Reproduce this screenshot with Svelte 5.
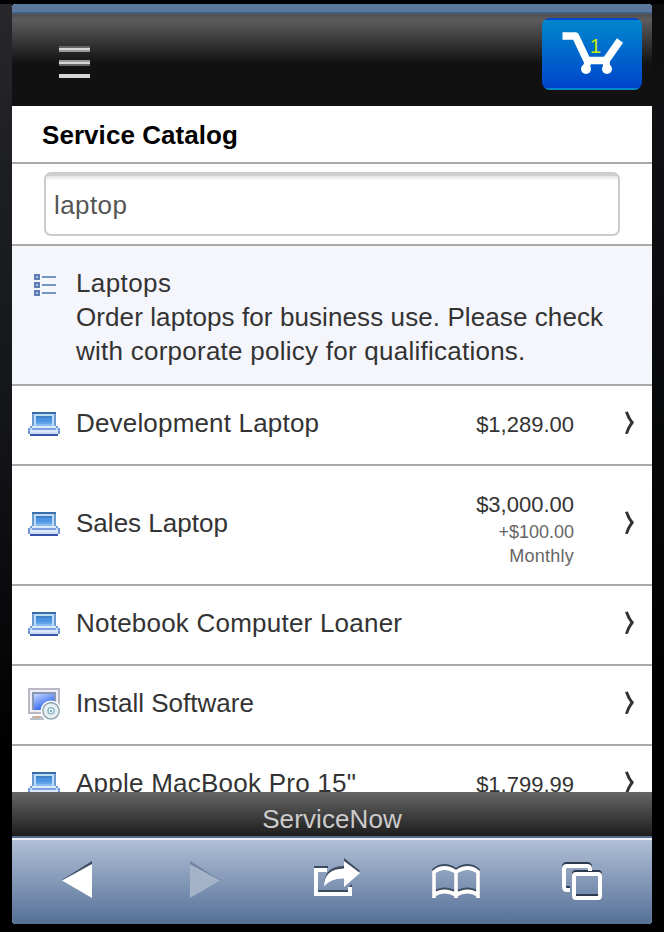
<script>
  const items = [
    { name: 'Development Laptop', w: 243, price: '$1,289.00', icon: 'laptop' },
    { name: 'Sales Laptop', w: 152, price: '$3,000.00', recurring: ['+$100.00', 'Monthly'], icon: 'laptop', tall: true },
    { name: 'Notebook Computer Loaner', w: 326, icon: 'laptop' },
    { name: 'Install Software', w: 178, icon: 'software' },
    { name: 'Apple MacBook Pro 15"', w: 280, price: '$1,799.99', icon: 'laptop' }
  ];
</script>

<div class="device">
  <div class="screen">
    <div class="strip"></div>
    <header>
      <svg class="menu" width="34" height="34" viewBox="0 0 34 34" shape-rendering="crispEdges">
        <path d="M1 1h31v2H1zM1 19h31v2H1z" fill="#666" />
        <path d="M1 3h31v2H1zM1 17h31v2H1zM1 29h31v4H1z" fill="#d6d6d6" />
        <path d="M1 5h31v2H1zM1 15h31v2H1z" fill="#999" />
      </svg>
      <div class="cart">
        <svg width="100" height="72" viewBox="0 0 100 72">
          <path d="M20.500 18H33.500L45 42.500H64L78 22.500" fill="none" stroke="#fff" stroke-width="7.500" stroke-linejoin="round" />
          <path d="M46 43L44 51M64 43L65 51" stroke="#fff" stroke-width="7" />
          <circle cx="44" cy="51" r="5" fill="#fff" /><circle cx="65" cy="51" r="5" fill="#fff" />
        </svg>
        <span class="count">1</span>
      </div>
    </header>
    <h1>Service Catalog</h1>
    <div class="search"><div class="field">laptop</div></div>
    <div class="category">
      <svg width="24" height="24" viewBox="0 0 24 24" shape-rendering="crispEdges">
        {#each [0, 8, 16] as y}
          <rect x="0" y={y} width="6" height="6" fill="#607db4" />
          <rect x="2" y={y + 2} width="2" height="2" fill="#a7bce0" />
          <rect x="8" y={y + 2} width="14" height="2" fill="#7396c7" />
        {/each}
      </svg>
      <div class="about">
        <div class="t1">Laptops</div>
        <div class="t2">Order laptops for business use. Please check</div>
        <div class="t3">with corporate policy for qualifications.</div>
      </div>
    </div>
    <main>
      {#each items as item}
        <div class="row" class:tall={item.tall}>
          {#if item.icon === 'laptop'}
            <svg class="ico" width="32" height="24" viewBox="0 0 16 12" shape-rendering="crispEdges">
              <path d="M2 0h12v7H2z" fill="#6a9ace" /><path d="M2 0h12v1H2z" fill="#3970aa" />
              <path d="M3 1h10v6H3z" fill="#bfdcf7" /><path d="M4 2h8v5H4z" fill="#4b95e4" />
              <path d="M4 2h8v1H4z" fill="#417fc9" /><path d="M4 5h8v1H4z" fill="#64a5ea" /><path d="M4 6h8v1H4z" fill="#8bbcf1" />
              <path d="M1 7h14v1H1zM0 8h16v3H0z" fill="#7098d2" /><path d="M2 7h12v1H2z" fill="#d9eafa" />
              <path d="M1 8h1v1H1zM14 8h1v1h-1z" fill="#c4d8f4" /><path d="M2 8h12v1H2z" fill="#7f9fdc" /><path d="M1 9h14v1H1z" fill="#dce8fb" />
              <path d="M1 10h14v1H1z" fill="#cddcf7" /><path d="M1 11h14v1H1z" fill="#3555a8" />
            </svg>
          {:else}
            <svg class="ico" width="32" height="32" viewBox="0 0 16 16">
              <defs><linearGradient id="display" x2=".6" y2="1"><stop stop-color="#c4d8ff" /><stop offset="1" stop-color="#2459ec" /></linearGradient></defs>
              <g shape-rendering="crispEdges">
                <path d="M0 0h16v13H0z" fill="#b8b8c8" /><path d="M1 1h14v11H1z" fill="#eeeef4" />
                <path d="M2 2h12v9H2z" fill="#8797b4" /><path d="M3 3h10v8H3z" fill="url(#display)" />
                <path d="M2 14h6v1H2zM1 15h7v1H1z" fill="#b9c0c9" /><path d="M3 14h3v1H3z" fill="#d2ad95" />
              </g>
              <circle cx="11.500" cy="11.400" r="5.200" fill="#fff" /><circle cx="11.500" cy="11.400" r="4.100" fill="#e5eef0" stroke="#96a9b2" stroke-width=".8" />
              <circle cx="11.500" cy="11.400" r="1.500" fill="#fff" stroke="#8fb9cb" stroke-width=".8" /><path d="M11 11h1v1h-1z" fill="#78a6b9" />
            </svg>
          {/if}
          <svg class="label" width="350" height="34"><text x="0" y="26" textLength={item.w}>{item.name}</text></svg>
          {#if item.price}
            <div class="prices">
              <div class="price">{item.price}</div>
              {#each item.recurring ?? [] as line}<div class="sub">{line}</div>{/each}
            </div>
          {/if}
          <svg class="chev" width="12" height="24" viewBox="0 0 12 24"><path d="M1 1L3.800 .6Q6.300 7.500 10 11.500Q6.300 16 3.800 23L1 22.700Q3 16 6.300 11.500Q3 7.500 1 1z" fill="#333" /></svg>
        </div>
      {/each}
    </main>
    <footer><span>ServiceNow</span></footer>
    <nav>
      <svg width="640" height="84" viewBox="0 0 640 84">
        <path d="M50 40L80 21V25L53 40z" fill="#3e4d62" /><path d="M50 40.500L80 24V58z" fill="#fff" />
        <path d="M178 21L208 40H204L178 25z" fill="#71829d" /><path d="M178 24L208 40.500L178 58z" fill="#a5b3c8" />
        <g>
          <path d="M302 26H316V28H302zM306 50H336V52H306zM336 48L340 44V48z" fill="#3c4b60" />
          <path d="M315 30H304V54H338V47" fill="none" stroke="#fff" stroke-width="4" />
          <path d="M312 44Q313 26 332 26V18L348 31L332 44V37Q319 36 312 46z" fill="#3c4b60" />
          <path d="M312 46.500Q312 29 332 28.500V21L348 33L332 47V38.500Q319 38 312 46.500z" fill="#fff" />
        </g>
        {#each [{ y: -2, c: '#3d4b60' }, { y: 0, c: '#fff' }] as p}
          <path transform="translate(0 {p.y})" d="M422 58V32Q432 24 444 32V58M444 32Q456 24 466 32V58M422 55Q432 48 444 55Q456 48 466 55" fill="none" stroke={p.c} stroke-width="3.700" />
        {/each}
        {#each [{ y: -2, c: '#2d394d' }, { y: 0, c: '#fff' }] as p}
          <g transform="translate(0 {p.y})" fill="none" stroke={p.c} stroke-width="4">
            <path d="M558 50H555Q552 50 552 47V29Q552 26 555 26H575Q578 26 578 29V31" />
            <rect x="562" y="34" width="26" height="24" rx="2" />
          </g>
        {/each}
      </svg>
    </nav>
  </div>
</div>

<style>
  :global(body) { background: #000; }
  .device { box-sizing: border-box; width: 664px; height: 932px; padding: 4px 12px 8px;
    background: linear-gradient(#000, #000) 0 0 / 100% 4px no-repeat,
      linear-gradient(#27272c, #1e1f23 160px, #15161a 400px, #000 760px) 0 0 / 12px 100% no-repeat,
      linear-gradient(#0d0d0e, #111113 110px, #08090a 400px, #000 700px) 100% 0 / 12px 100% no-repeat,
      #000;
    font-family: "Liberation Sans", Arial, sans-serif; font-size: 26px; color: #333; white-space: nowrap; }
  .screen { height: 920px; display: flex; flex-direction: column; overflow: hidden; background: #fff; border-radius: 4px; }
  .strip { box-sizing: border-box; height: 10px; background: #5b779e; border-bottom: 2px solid #415e83; flex: none; }
  header { box-sizing: border-box; height: 92px; flex: none; display: flex; justify-content: space-between; padding: 4px 10px 0 46px;
    background: linear-gradient(#505050, #5c5c5c 6px, #111 50px); }
  .menu { margin-top: 27px; }
  .cart { position: relative; width: 100px; height: 72px; border-radius: 8px; overflow: hidden;
    background: linear-gradient(#04c 2px, #08c 2px, #04c 70px, #08c 70px); }
  .count { position: absolute; left: 48px; top: 18px; font-size: 20px; line-height: 20px; color: #c8ee00; }
  h1 { box-sizing: border-box; height: 58px; flex: none; margin: 0; padding-left: 30px; border-bottom: 2px solid #a9a9a9;
    font-size: 26px; line-height: 59px; color: #000; letter-spacing: .06px; }
  .search { box-sizing: border-box; height: 82px; flex: none; padding: 8px 32px 8px; border-bottom: 2px solid #a9a9a9; }
  .field { box-sizing: border-box; height: 64px; border: 2px solid #ccc; border-radius: 7px; padding-left: 8px; line-height: 63px; color: #555; letter-spacing: .4px;
    background: linear-gradient(#d0d0d0 2px, #e8e8e8 2px 4px, #f6f6f6 4px 6px, #fff 6px); }
  .category { box-sizing: border-box; height: 140px; flex: none; display: flex; padding: 20px 0 0 22px; background: #f5f6fc; border-bottom: 2px solid #a9a9a9; }
  .category svg { margin-top: 8px; width: 24px; flex: none; }
  .about { padding-left: 18px; line-height: 34px; }
  .t1 { letter-spacing: .4px; }
  .t2 { letter-spacing: .09px; }
  .t3 { letter-spacing: .25px; }
  main { height: 406px; overflow: hidden; flex: none; }
  .row { box-sizing: border-box; height: 80px; display: flex; align-items: center; padding: 0 16px 4px; border-bottom: 2px solid #a9a9a9; }
  .row.tall { height: 120px; }
  .ico { flex: none; margin-top: 2px; }
  .label { margin-left: 16px; flex: none; fill: #333; }
  .prices { width: 148px; text-align: right; padding-top: 4px; }
  .price { font-size: 22px; line-height: 28px; }
  .tall .prices { padding-top: 14px; }
  .tall .price { line-height: 26px; padding-bottom: 2px; }
  .sub { font-size: 18px; line-height: 24px; color: #666; }
  .sub:last-child { letter-spacing: .25px; }
  .chev { margin-left: auto; flex: none; }
  footer { height: 44px; flex: none; line-height: 54px; text-align: center; color: #ccc; letter-spacing: .1px; background: linear-gradient(#666, #1d1d1d); }
  nav { box-sizing: border-box; height: 88px; flex: none; border-top: 2px solid #536b8d; background: linear-gradient(#edf2f8 2px, #b0bfd6 2px, #557097); padding-top: 2px; }
  nav svg { display: block; }
</style>
